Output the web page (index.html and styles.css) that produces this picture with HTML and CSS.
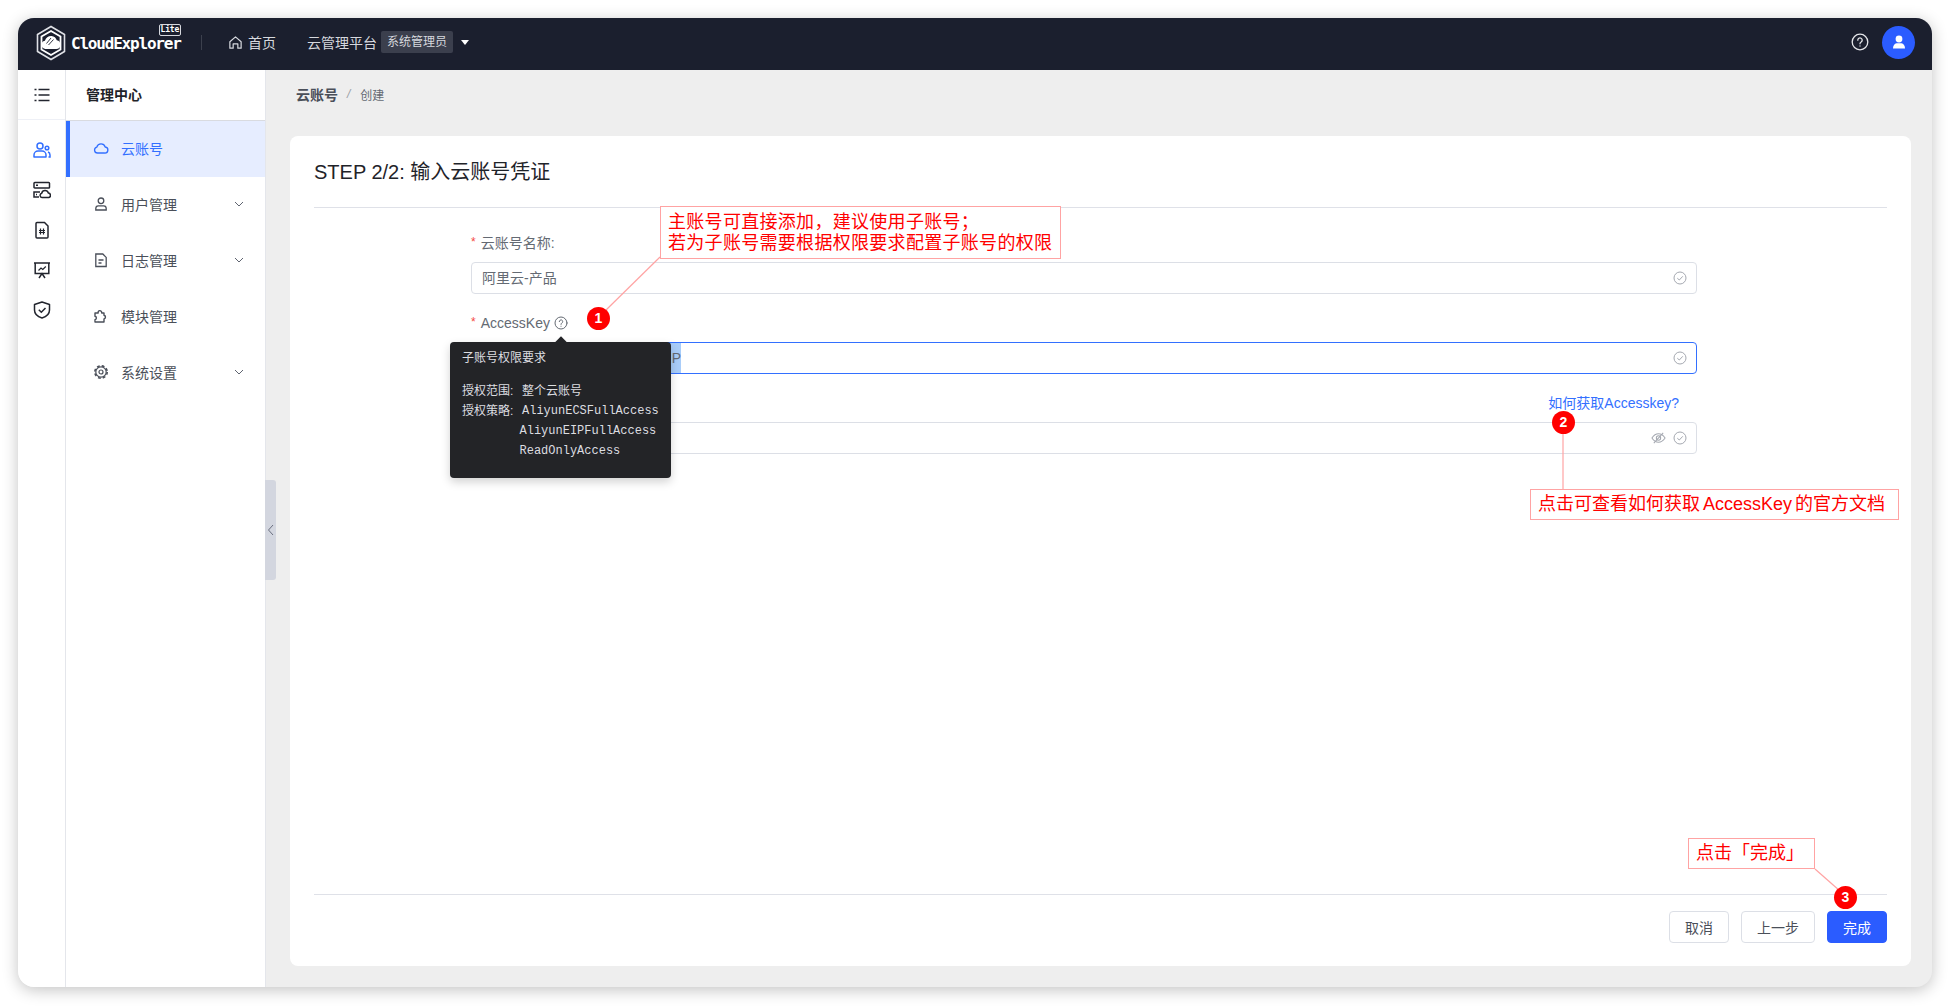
FILE: index.html
```html
<!DOCTYPE html>
<html lang="zh-CN">
<head>
  <meta charset="UTF-8">
  <meta name="viewport" content="width=device-width, initial-scale=1.0">
  <title>CloudExplorer</title>
  <link rel="stylesheet" href="styles.css">
</head>
<body>
  <div class="window">
    <header class="topbar">
      <svg class="logo" viewBox="0 0 32 36" width="32" height="36" fill="none">
        <path d="M16 1.500 29.500 9.500V26.500L16 34.500 2.500 26.500V9.500Z" stroke="#dfe1e6" stroke-width="1.600"/>
        <path d="M16 6 25.500 11.500V24.500L16 30 6.500 24.500V11.500Z" stroke="#fff" stroke-width="1.800"/>
        <path d="M10.500 24a4.200 4.200 0 0 1-.6-8.300c1-3.200 3.600-4.900 6.600-4.700 2.600.2 4.600 1.900 5.300 4.300a4.400 4.400 0 0 1-.6 8.700Z" fill="#fff"/>
        <path d="M11.500 18.500 16 13M13.500 20 18.500 14.500" stroke="#1b1f2e" stroke-width=".9"/>
      </svg>
      <div class="brand">CloudExplorer<span class="lite">Lite</span></div>
      <span class="topbar-sep"></span>
      <a class="nav-home">
        <svg viewBox="0 0 16 16" width="15" height="15" fill="none" stroke="#d6d8de" stroke-width="1.300" stroke-linejoin="round"><path d="M2 7.200 8 2l6 5.200V14h-3.500V9.500h-5V14H2Z"/></svg>
        首页
      </a>
      <span class="nav-platform">云管理平台</span>
      <span class="role">系统管理员</span>
      <span class="caret"></span>
      <div class="topbar-right">
        <svg viewBox="0 0 18 18" width="18" height="18" fill="none" stroke="#e4e5e9" stroke-width="1.300" stroke-linecap="round"><circle cx="9" cy="9" r="7.800"/><path d="M6.800 7.200a2.200 2.200 0 1 1 3.400 1.800c-.8.500-1.200 1-1.200 1.800"/><path d="M9 13v.1"/></svg>
        <span class="avatar">
          <svg viewBox="0 0 16 16" width="16" height="16" fill="#fff"><circle cx="8" cy="5" r="3.400"/><path d="M2 14.500c0-3 1.500-4.800 3.500-5.300h5c2 .5 3.500 2.300 3.500 5.300Z"/></svg>
        </span>
      </div>
    </header>

    <div class="main">
      <nav class="rail">
        <div class="rail-top">
          <svg viewBox="0 0 16 16" width="16" height="16" fill="none" stroke="#22252e" stroke-width="1.400"><path d="M4.500 2.500H15.500M4.500 8H15.500M4.500 13.500H15.500M.5 2.500h2M.5 8h2M.5 13.500h2"/></svg>
        </div>
        <div class="rail-icons">
          <a class="rail-icon">
            <svg viewBox="0 0 18 18" width="18" height="18" fill="none" stroke="#3370ff" stroke-width="1.500"><circle cx="7" cy="5" r="3"/><path d="M1 16v-2a4 4 0 0 1 4-4h4a4 4 0 0 1 4 4v2Z" stroke-linejoin="round"/><circle cx="14" cy="7" r="1.800"/><path d="M15 11c1.300.4 2 1.400 2 3v2h-1.500"/></svg>
          </a>
          <a class="rail-icon">
            <svg viewBox="0 0 18 18" width="18" height="18" fill="none" stroke="#22252e" stroke-width="1.500"><rect x="1" y="1.500" width="15.500" height="5.500" rx=".8"/><path d="M7 11H1v5h5M3 4.200h2M3 13.500h1"/><path d="M9 16.500a2.200 2.200 0 0 1-.3-4.300 3.500 3.500 0 0 1 6.700-.2 2.300 2.300 0 0 1 .4 4.500Z"/></svg>
          </a>
          <a class="rail-icon">
            <svg viewBox="0 0 18 18" width="18" height="18" fill="none" stroke="#22252e" stroke-width="1.500"><path d="M3 2.500a1 1 0 0 1 1-1h7.500L15 5v11a1 1 0 0 1-1 1H4a1 1 0 0 1-1-1Z"/><path d="M7.500 7.500v6M10.500 7.500v6M6 9.500h6M6 11.500h6" stroke-width="1.200"/></svg>
          </a>
          <a class="rail-icon">
            <svg viewBox="0 0 18 18" width="18" height="18" fill="none" stroke="#22252e" stroke-width="1.500"><path d="M1 2h16M2.200 2v10.500h13.600V2M6 17l3-4.500 3 4.500"/><path d="M5.500 9.500 8 7l1.800 1.500 3-3" stroke-width="1.200"/></svg>
          </a>
          <a class="rail-icon">
            <svg viewBox="0 0 18 18" width="18" height="18" fill="none" stroke="#22252e" stroke-width="1.500"><path d="M9 1 16.500 3.500V9c0 4-3.200 6.800-7.500 8C4.700 15.800 1.500 13 1.500 9V3.500Z" stroke-linejoin="round"/><path d="M5.800 8.800 8.300 11.200 12.500 7"/></svg>
          </a>
        </div>
      </nav>

      <aside class="sidebar">
        <div class="sidebar-title">管理中心</div>
        <a class="menu-item active">
          <svg class="menu-icon" viewBox="0 0 16 16" width="16" height="16" fill="none" stroke="currentColor" stroke-width="1.300"><path d="M4.500 13a3 3 0 0 1-.7-5.900 4.400 4.400 0 0 1 8.400-.1A3 3 0 0 1 11.500 13Z"/></svg>
          云账号
        </a>
        <a class="menu-item">
          <svg class="menu-icon" viewBox="0 0 16 16" width="16" height="16" fill="none" stroke="currentColor" stroke-width="1.300"><circle cx="8" cy="4.800" r="2.800"/><path d="M2.800 14v-1.500c0-1.500 1-2.700 2.500-2.700h5.400c1.500 0 2.500 1.200 2.500 2.700V14Z"/></svg>
          用户管理
          <svg class="chevron" viewBox="0 0 12 12" width="12" height="12" fill="none" stroke="#5f6470" stroke-width="1"><path d="M2 4l4 4 4-4"/></svg>
        </a>
        <a class="menu-item">
          <svg class="menu-icon" viewBox="0 0 16 16" width="16" height="16" fill="none" stroke="currentColor" stroke-width="1.300"><path d="M2.800 2h7l3.400 3.400V14.500H2.800Z"/><path d="M5.500 8h5M5.500 11h3"/></svg>
          日志管理
          <svg class="chevron" viewBox="0 0 12 12" width="12" height="12" fill="none" stroke="#5f6470" stroke-width="1"><path d="M2 4l4 4 4-4"/></svg>
        </a>
        <a class="menu-item">
          <svg class="menu-icon" viewBox="0 0 16 16" width="16" height="16" fill="none" stroke="currentColor" stroke-width="1.400" stroke-linejoin="round"><path d="M2 7.500V5h3.200a1.800 1.800 0 1 1 3.500-.4V5H11v2.200a1.900 1.900 0 0 1 0 3.700V14H2v-2.200a1.800 1.800 0 0 0 0-3.500Z"/></svg>
          模块管理
        </a>
        <a class="menu-item">
          <svg class="menu-icon" viewBox="0 0 16 16" width="16" height="16" fill="none" stroke="currentColor"><circle cx="8" cy="8" r="5.200" stroke-width="1.200"/><circle cx="8" cy="8" r="6.200" stroke-width="1.600" stroke-dasharray="2.800 2.070"/><circle cx="8" cy="8" r="2" stroke-width="1.200"/></svg>
          系统设置
          <svg class="chevron" viewBox="0 0 12 12" width="12" height="12" fill="none" stroke="#5f6470" stroke-width="1"><path d="M2 4l4 4 4-4"/></svg>
        </a>
        <div class="collapse-handle">
          <svg viewBox="0 0 8 12" width="8" height="12" fill="none" stroke="#6b7080" stroke-width="1"><path d="M6 1 1.500 6 6 11"/></svg>
        </div>
      </aside>

      <section class="content">
        <div class="breadcrumb">
          <b>云账号</b><i>/</i><span>创建</span>
        </div>
        <div class="card">
          <h2 class="card-title">STEP 2/2: 输入云账号凭证</h2>
          <form class="form">
            <div class="form-row">
              <div class="form-label"><label class="required">云账号名称:</label></div>
              <div class="field">
                <span class="field-value">阿里云-产品</span>
                <svg class="check" viewBox="0 0 14 14" width="14" height="14" fill="none" stroke="#a4a8b0" stroke-width="1"><circle cx="7" cy="7" r="6"/><path d="M4.300 7.200 6.300 9l3.500-3.700"/></svg>
              </div>
            </div>
            <div class="form-row">
              <div class="form-label">
                <label class="required">AccessKey</label>
                <svg class="help" viewBox="0 0 14 14" width="14" height="14" fill="none" stroke="#646a73" stroke-width="1" stroke-linecap="round"><circle cx="7" cy="7" r="6"/><path d="M5.300 5.600a1.700 1.700 0 1 1 2.600 1.400c-.6.400-.9.800-.9 1.400M7 10.200v.1"/></svg>
              </div>
              <div class="field focused">
                <span class="selected">P</span>
                <svg class="check" viewBox="0 0 14 14" width="14" height="14" fill="none" stroke="#a4a8b0" stroke-width="1"><circle cx="7" cy="7" r="6"/><path d="M4.300 7.200 6.300 9l3.500-3.700"/></svg>
              </div>
            </div>
            <div class="form-row">
              <div class="form-label">
                <a class="form-link">如何获取Accesskey?</a>
              </div>
              <div class="field">
                <svg class="eye" viewBox="0 0 16 14" width="15" height="14" fill="none" stroke="#a4a8b0" stroke-width="1.100"><path d="M1 7c2-3 4.300-4.500 7-4.500S13 4 15 7c-2 3-4.300 4.500-7 4.500S3 10 1 7Z"/><circle cx="8" cy="7" r="2.300"/><path d="M3 12.500 13 1.500"/></svg>
                <svg class="check" viewBox="0 0 14 14" width="14" height="14" fill="none" stroke="#a4a8b0" stroke-width="1"><circle cx="7" cy="7" r="6"/><path d="M4.300 7.200 6.300 9l3.500-3.700"/></svg>
              </div>
            </div>
          </form>
          <div class="card-footer">
            <button class="btn" type="button">取消</button>
            <button class="btn" type="button">上一步</button>
            <button class="btn primary" type="button">完成</button>
          </div>
        </div>
      </section>
    </div>

    <div class="tooltip">
      <p class="tooltip-title">子账号权限要求</p>
      <div class="tooltip-row"><span class="tooltip-key">授权范围:</span><span>整个云账号</span></div>
      <div class="tooltip-row"><span class="tooltip-key">授权策略:</span><code>AliyunECSFullAccess</code></div>
      <div class="tooltip-row indent"><code>AliyunEIPFullAccess</code></div>
      <div class="tooltip-row indent"><code>ReadOnlyAccess</code></div>
    </div>

    <svg class="callout-lines" width="1914" height="969" fill="none" stroke="#ffa3a3" stroke-width="1.200">
      <path d="M642 239 586 294"/>
      <path d="M1545 415V471"/>
      <path d="M1797 851 1822 873"/>
    </svg>
    <div class="callout callout-one">主账号可直接添加&#xFF0C;建议使用子账号&#xFF1B;<br>若为子账号需要根据权限要求配置子账号的权限</div>
    <div class="callout callout-two">点击可查看如何获取 AccessKey 的官方文档</div>
    <div class="callout callout-three">点击「完成」</div>
    <span class="badge badge-one">1</span>
    <span class="badge badge-two">2</span>
    <span class="badge badge-three">3</span>
  </div>
</body>
</html>
```

FILE: styles.css
```css
* {
  box-sizing: border-box;
}

html,
body {
  height: 100%;
}

body {
  margin: 0;
  padding: 18px 19px 19px 18px;
  background: #fff;
  font-family: "Liberation Sans", "Noto Sans CJK SC", sans-serif;
  font-size: 14px;
  color: #646a73;
}

.window {
  position: relative;
  height: 100%;
  display: flex;
  flex-direction: column;
  border-radius: 16px;
  overflow: hidden;
  background: #eeeeee;
  box-shadow: 0 3px 16px rgba(0, 0, 0, 0.24);
}

/* top bar */
.topbar {
  height: 52px;
  flex: none;
  display: flex;
  align-items: center;
  padding: 0 17px 4px 17px;
  background: #1b1f2e;
  color: #d6d8de;
}

.logo {
  flex: none;
  margin-top: 2px;
}

.brand {
  position: relative;
  margin-top: 2px;
  margin-left: 4px;
  width: 110px;
  font-family: "DejaVu Sans Mono", monospace;
  font-size: 16px;
  font-weight: 700;
  letter-spacing: -1.2px;
  color: #fff;
}

.lite {
  position: absolute;
  top: -10px;
  right: 0;
  padding: 0 1px;
  border: 1px solid #d6d8de;
  border-radius: 2px;
  font-size: 8px;
  line-height: 10px;
  letter-spacing: -0.2px;
}

.topbar-sep {
  width: 1px;
  height: 15px;
  margin-left: 20px;
  background: #3c404d;
}

.nav-home {
  display: flex;
  align-items: center;
  gap: 5px;
  margin-left: 26px;
}

.nav-platform {
  margin-left: 31px;
}

.role {
  margin-left: 4px;
  padding: 0 6px;
  height: 22px;
  border-radius: 2px;
  background: #3b3f4d;
  font-size: 12px;
  line-height: 22px;
}

.caret {
  margin-left: 8px;
  border-left: 4px solid transparent;
  border-right: 4px solid transparent;
  border-top: 5px solid #fff;
}

.topbar-right {
  margin-left: auto;
  display: flex;
  align-items: center;
  gap: 13px;
}

.avatar {
  width: 33px;
  height: 33px;
  display: flex;
  align-items: center;
  justify-content: center;
  border-radius: 50%;
  background: #2b5cff;
}

/* columns */
.main {
  flex: 1;
  min-height: 0;
  display: flex;
}

.rail {
  width: 48px;
  flex: none;
  background: #fff;
  border-right: 1px solid #e4e6eb;
}

.rail-top {
  height: 50px;
  display: flex;
  align-items: center;
  justify-content: center;
  border-bottom: 1px solid #eef0f6;
}

.rail-icons {
  padding-top: 10px;
}

.rail-icon {
  height: 40px;
  display: flex;
  align-items: center;
  justify-content: center;
}

.sidebar {
  position: relative;
  width: 200px;
  flex: none;
  background: #fff;
  border-right: 1px solid #e4e6eb;
  color: #4a4f59;
}

.sidebar-title {
  height: 51px;
  padding-left: 20px;
  border-bottom: 1px solid #d9dbe0;
  font-size: 14px;
  font-weight: 700;
  line-height: 50px;
  color: #1f2329;
}

.menu-item {
  height: 56px;
  display: flex;
  align-items: center;
  padding-left: 27px;
  padding-bottom: 2px;
}

.menu-icon {
  margin-right: 12px;
  flex: none;
}

.chevron {
  margin-left: auto;
  margin-right: 20px;
}

.menu-item.active {
  padding-left: 23px;
  border-left: 4px solid #3370ff;
  background: #e6edff;
  color: #3370ff;
}

.collapse-handle {
  position: absolute;
  top: 410px;
  left: 199px;
  width: 11px;
  height: 100px;
  display: flex;
  align-items: center;
  justify-content: center;
  border-radius: 0 3px 3px 0;
  background: #d3d6df;
}

/* content */
.content {
  flex: 1;
  min-width: 0;
  display: flex;
  flex-direction: column;
  padding: 0 21px 21px 24px;
}

.breadcrumb {
  height: 50px;
  margin-bottom: 16px;
  padding-left: 6px;
  padding-bottom: 2px;
  display: flex;
  align-items: center;
  color: #646a73;
  font-size: 12px;
}

.breadcrumb b {
  font-size: 14px;
  color: #4a4f59;
}

.breadcrumb i {
  margin: 0 10px 0 9px;
  color: #9a9ea6;
}

.card {
  flex: 1;
  display: flex;
  flex-direction: column;
  padding: 0 24px;
  border-radius: 8px;
  background: #fff;
}

.card-title {
  height: 72px;
  margin: 0;
  flex: none;
  border-bottom: 1px solid #dfe1e8;
  font-size: 20px;
  font-weight: 400;
  line-height: 73px;
  color: #1f2329;
}

.form {
  flex: 1;
  padding: 24px 190px 0 157px;
}

.form-row {
  margin-bottom: 18px;
}

.form-label {
  height: 22px;
  margin-bottom: 8px;
  padding-bottom: 1px;
  display: flex;
  align-items: center;
  line-height: 21px;
}

.required::before {
  content: "*";
  margin-right: 5px;
  color: #f54a45;
  font-size: 12px;
  vertical-align: 2px;
}

.help {
  margin-left: 4px;
}

.form-link {
  margin-top: 2px;
  margin-left: auto;
  margin-right: 18px;
  color: #3370ff;
}

.field {
  height: 32px;
  display: flex;
  align-items: center;
  padding: 0 9px 0 10px;
  border: 1px solid #dcdfe6;
  border-radius: 4px;
  color: #646a73;
}

.field-value {
  margin-top: -2px;
}

.field.focused {
  border-color: #3370ff;
  padding-left: 0;
}

.selected {
  width: 209px;
  height: 30px;
  background: #a9cdf9;
  font-size: 14px;
  line-height: 30px;
  text-align: right;
}

.check {
  flex: none;
  margin-left: auto;
}

.eye {
  margin-left: auto;
  margin-right: 7px;
}

.eye + .check {
  margin-left: 0;
}

.card-footer {
  height: 72px;
  flex: none;
  display: flex;
  justify-content: flex-end;
  gap: 12px;
  padding-top: 16px;
  border-top: 1px solid #dfe1e8;
}

.btn {
  height: 32px;
  padding: 0 15px;
  min-width: 60px;
  border: 1px solid #dcdfe6;
  border-radius: 4px;
  background: #fff;
  color: #4a4f59;
  font-family: inherit;
  font-size: 14px;
}

.btn.primary {
  border-color: #2b5cff;
  background: #2b5cff;
  color: #fff;
}

/* tooltip on the AccessKey help icon */
.tooltip {
  position: absolute;
  top: 324px;
  left: 432px;
  width: 221px;
  height: 136px;
  padding: 6px 12px;
  border-radius: 4px;
  background: #232427;
  box-shadow: 0 4px 10px rgba(0, 0, 0, 0.18);
  color: #dcdde0;
  font-size: 12px;
  line-height: 20px;
}

.tooltip::before {
  content: "";
  position: absolute;
  top: -4px;
  left: 107px;
  width: 8px;
  height: 8px;
  background: #232427;
  transform: rotate(45deg);
}

.tooltip-title {
  margin: 0 0 13px;
}

.tooltip-row {
  display: flex;
}

.tooltip-key {
  width: 60px;
  flex: none;
}

.tooltip-row.indent {
  padding-left: 57.5px;
}

.tooltip code {
  font-family: "Liberation Mono", monospace;
  font-size: 12px;
}

/* red callouts drawn over the page */
.callout-lines {
  position: absolute;
  top: 0;
  left: 0;
  pointer-events: none;
}

.callout {
  position: absolute;
  padding: 4px 7px;
  border: 1px solid #ffa3a3;
  background: #fff;
  color: #f00;
  font-size: 18px;
  line-height: 21px;
  white-space: nowrap;
}

.callout-one {
  top: 188px;
  left: 642px;
  width: 401px;
  padding-top: 5px;
  letter-spacing: 0.3px;
}

.callout-two {
  top: 471px;
  left: 1512px;
  width: 369px;
  height: 31px;
  word-spacing: -2px;
}

.callout-three {
  top: 820px;
  left: 1670px;
  width: 127px;
  height: 31px;
}

.badge {
  position: absolute;
  width: 23px;
  height: 23px;
  border-radius: 50%;
  background: #f00;
  color: #fff;
  font-size: 14px;
  font-weight: 700;
  line-height: 23px;
  text-align: center;
}

.badge-one {
  top: 289px;
  left: 569px;
}

.badge-two {
  top: 393px;
  left: 1534px;
}

.badge-three {
  top: 868px;
  left: 1816px;
}
```
